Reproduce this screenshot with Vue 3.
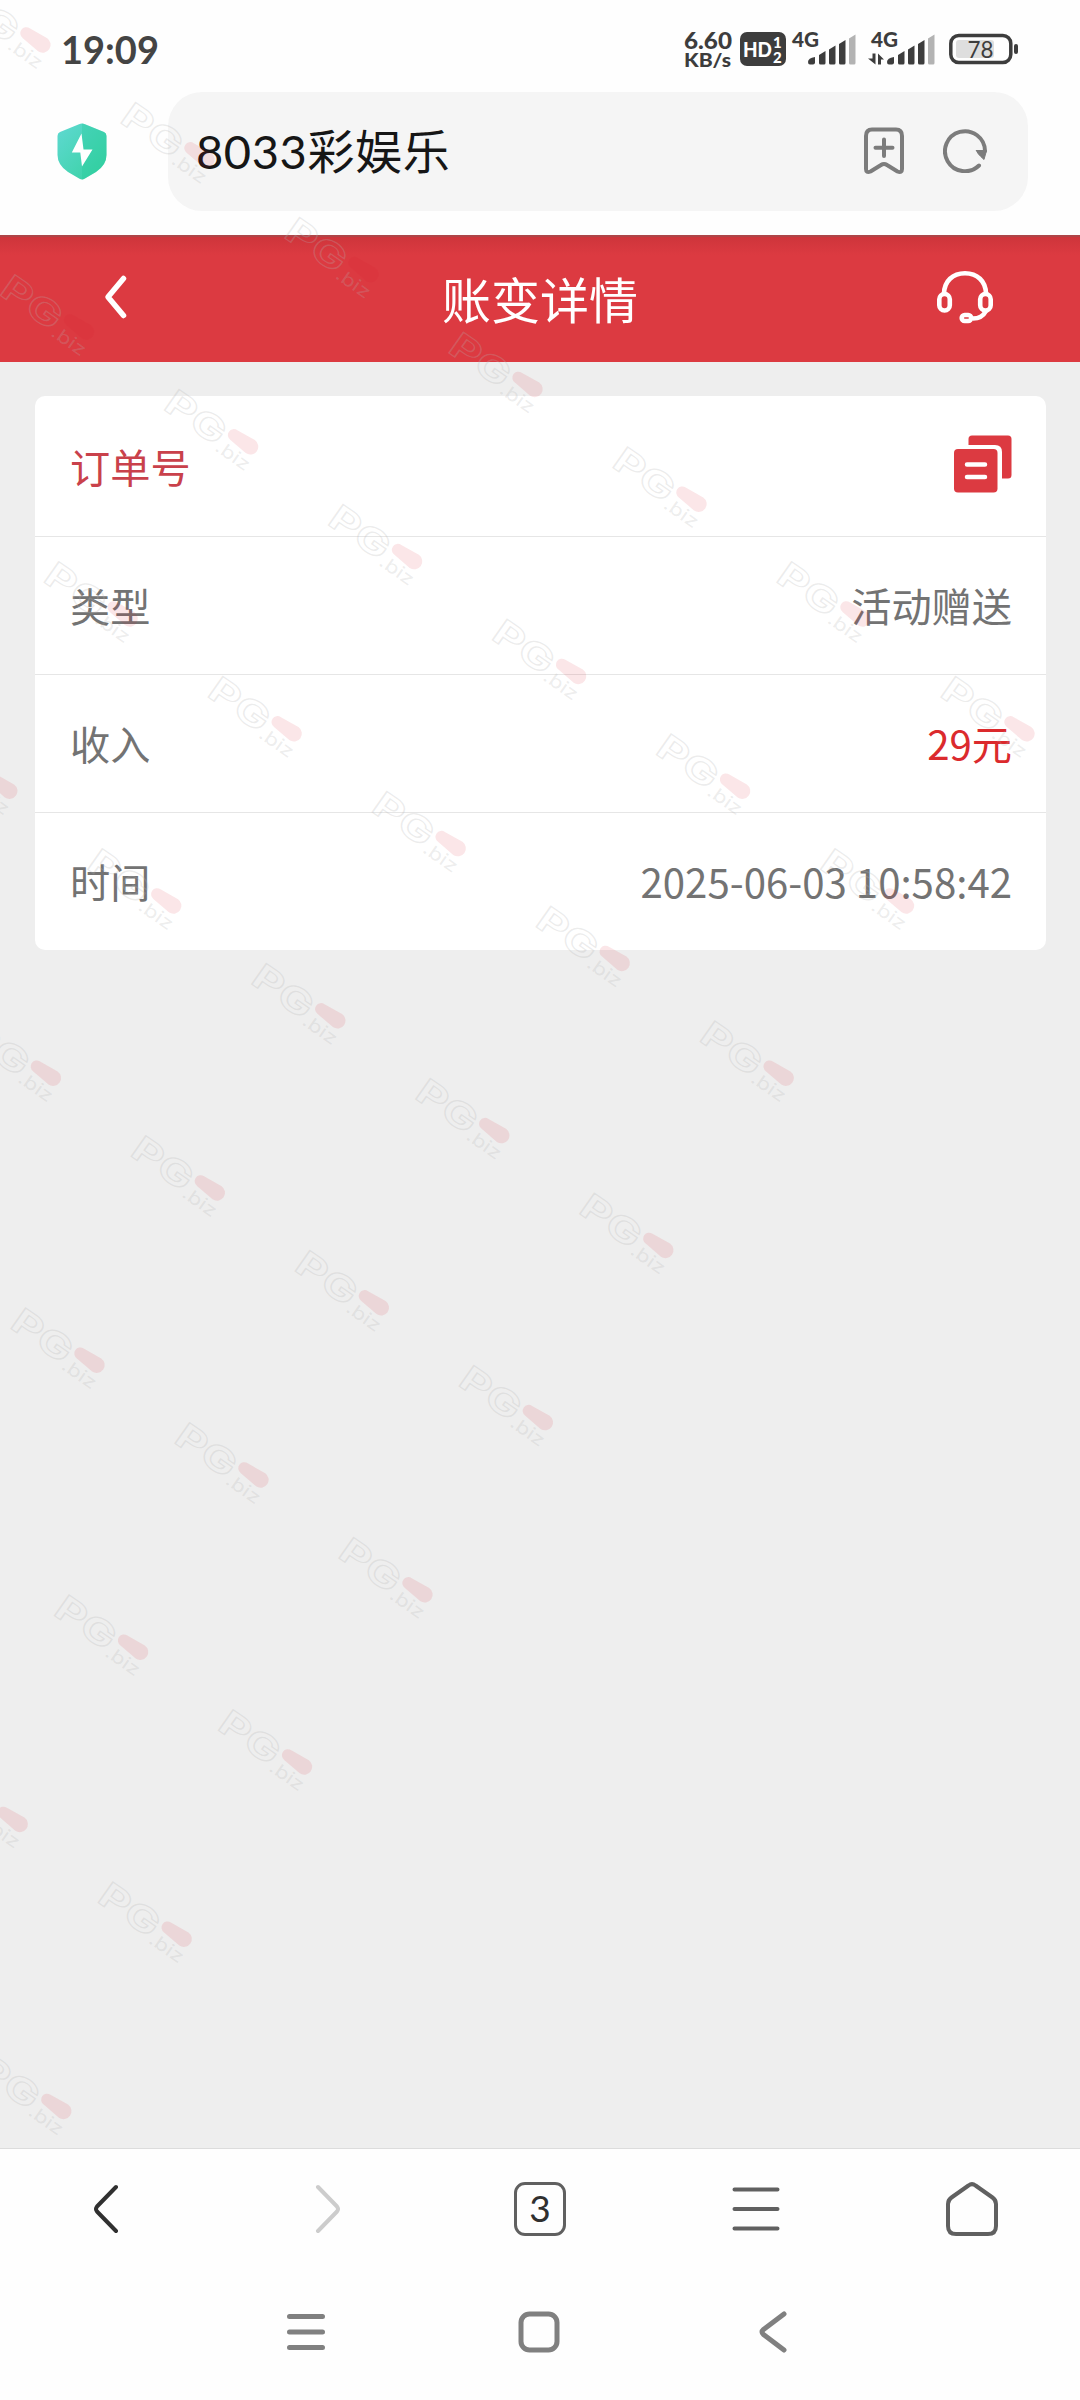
<template>
  <div class="phone">
    <header class="status-bar">
      <span class="clock">19:09</span>
      <svg class="status-icons" width="340" height="50" viewBox="680 25 340 50">
        <g class="bold-text">
          <text x="684" y="48.500" font-size="22" textLength="48" lengthAdjust="spacingAndGlyphs">6.60</text>
          <text x="684" y="67" font-size="19.500" textLength="47" lengthAdjust="spacingAndGlyphs">KB/s</text>
        </g>
        <rect x="740" y="32" width="46" height="34" rx="7" fill="#3d3d3d" />
        <g class="bold-text inverse">
          <text x="743" y="56.500" font-size="21" textLength="29" lengthAdjust="spacingAndGlyphs">HD</text>
          <text x="773" y="48" font-size="15">1</text>
          <text x="773" y="62.500" font-size="15">2</text>
        </g>
        <g v-for="sim in sims" :key="sim.x" :transform="`translate(${sim.x} 0)`">
          <text class="bold-text" x="0" y="47" font-size="21" textLength="27" lengthAdjust="spacingAndGlyphs">4G</text>
          <path v-if="sim.data" d="M-3 58.500H1.500V53.500H4.500V64.500ZM7 64.500V53.500L13 59.500H10V64.500Z" fill="#3d3d3d" />
          <path d="M16 62Q16 58 23 57V62.500Q23 64.500 21 64.500H18Q16 64.500 16 62Z" fill="#3d3d3d" />
          <path v-for="bar in bars" :key="bar.x" :d="barPath(bar)" :fill="bar.color" />
        </g>
        <rect x="950.8" y="35.500" width="60" height="27" rx="8" fill="none" stroke="#3d3d3d" stroke-width="3.500" />
        <rect x="956" y="40" width="38" height="18" rx="3" fill="#dedede" />
        <rect x="1014" y="44" width="4" height="10" rx="2" fill="#3d3d3d" />
        <text class="battery-text" x="980.500" y="57.500" font-size="24" text-anchor="middle" textLength="26" lengthAdjust="spacingAndGlyphs">78</text>
      </svg>
    </header>

    <section class="browser-bar">
      <svg class="shield" width="50" height="57" viewBox="0 0 50 57">
        <defs>
          <linearGradient id="shieldFill" x1="0" y1="0" x2="1" y2="1">
            <stop offset="0" stop-color="#5fd9d2" />
            <stop offset="1" stop-color="#36d19f" />
          </linearGradient>
        </defs>
        <path d="M25 .5Q26.500 .5 28 1.300L47 9Q49.500 10 49.500 13V32Q49.500 42 39 49L27.500 55.800Q25 57.300 22.500 55.800L11 49Q.5 42 .5 32V13Q.5 10 3 9L22 1.300Q23.500 .5 25 .5Z" fill="url(#shieldFill)" />
        <path d="M25 .5Q26.500 .5 28 1.300L47 9Q49.500 10 49.500 13V32Q49.500 42 39 49L27.500 55.800Q26 56.700 25 56.700Z" fill="#20c997" opacity=".3" />
        <path d="M24.500 10.500L14.800 29.500H23.300L25 43.500L35.500 26.500H26.500Z" fill="#fff" />
      </svg>
      <div class="address">
        <span class="address-text">8033彩娱乐</span>
        <svg class="line-icon" width="42" height="48" viewBox="0 0 42 48">
          <path d="M9 2.500H33Q39 2.500 39 9V42Q39 46.500 34.500 44.500L24 38Q21 36 18 38L7.500 44.500Q3 46.500 3 42V9Q3 2.500 9 2.500Z" />
          <path d="M21 12.500V29M12.500 20.800H29.500" />
        </svg>
        <svg class="line-icon reload" width="44" height="44" viewBox="0 0 44 44">
          <path d="M36 36.500A20 20 0 1 1 42 22" />
          <path class="solid" d="M33.500 21.500H43.500L41 30.500Q33.500 24 33.500 21.500Z" />
        </svg>
      </div>
    </section>

    <nav class="title-bar">
      <svg width="24" height="46" viewBox="0 0 24 46">
        <path d="M19.500 4.500L4 23L19.500 41.500" fill="none" stroke="#fff" stroke-width="5.500" stroke-linecap="round" stroke-linejoin="round" />
      </svg>
      <h1>账变详情</h1>
      <svg width="58" height="54" viewBox="0 0 58 54" fill="none" stroke="#fff" stroke-width="4.600">
        <path d="M8 24C8 11 17 3.300 29 3.300S50 11 50 24" />
        <rect x="3.300" y="24" width="10.500" height="16.500" rx="5.200" />
        <rect x="44.200" y="24" width="10.500" height="16.500" rx="5.200" />
        <path d="M50 41Q46 48.500 37 48.500" />
        <rect x="25.700" y="45" width="9.500" height="6" rx="3" />
      </svg>
    </nav>

    <main class="content">
      <div class="card">
        <div v-for="row in rows" :key="row.label" class="row">
          <span :class="{ accent: row.copy }">{{ row.label }}</span>
          <svg v-if="row.copy" class="copy" width="58" height="58" viewBox="0 0 58 58">
            <path d="M14.500 10V4Q14.500 .5 18 .5H54Q57.500 .5 57.500 4V40Q57.500 43.500 54 43.500H48V17Q48 10 41 10Z" fill="#dc3a41" />
            <rect x="0" y="14" width="43.500" height="43.500" rx="4" fill="#dc3a41" />
            <path d="M13 29.500H31M13 42H31" stroke="#fff" stroke-width="4.500" stroke-linecap="round" />
          </svg>
          <span v-else :class="{ amount: row.amount }">{{ row.value }}</span>
        </div>
      </div>
    </main>

    <footer class="toolbar">
      <button>
        <svg width="26" height="50" viewBox="0 0 26 50"><path class="back" d="M23 3L4 22.500Q2 25 4 27.500L23 47" /></svg>
      </button>
      <button>
        <svg width="26" height="50" viewBox="0 0 26 50"><path class="forward" d="M3 3L22 22.500Q24 25 22 27.500L3 47" /></svg>
      </button>
      <button><span class="tabs">3</span></button>
      <button>
        <svg width="48" height="50" viewBox="0 0 48 50"><path d="M2.500 5.500H45.500M2.500 25H45.500M2.500 44.500H45.500" /></svg>
      </button>
      <button>
        <svg width="52" height="54" viewBox="0 0 52 54">
          <path d="M22.500 3.500Q26 .8 29.500 3.500L46.500 15.500Q50 18 50 22V44Q50 52 42 52H10Q2 52 2 44V22Q2 18 5.500 15.500Z" />
        </svg>
      </button>
    </footer>

    <div class="system-nav">
      <svg width="40" height="42" viewBox="0 0 40 42"><path d="M3.500 5.500H36.500M3.500 21H36.500M3.500 36.500H36.500" /></svg>
      <svg class="home" width="42" height="42" viewBox="0 0 42 42"><rect x="3" y="3" width="36" height="36" rx="8.500" /></svg>
      <svg width="28" height="42" viewBox="0 0 28 42"><path d="M25 3L4.500 18.500Q1.500 21 4.500 23.500L25 39" /></svg>
    </div>

    <svg class="watermark" width="1080" height="2400" viewBox="0 0 1080 2400">
      <g v-for="mark in marks" :key="`${mark.x}-${mark.y}`" :transform="`translate(${mark.x} ${mark.y}) rotate(35)`">
        <text class="mark-name" x="-85" y="19" textLength="66" lengthAdjust="spacingAndGlyphs">PG</text>
        <path d="M-11 -6.500L9 -8.500A8 8 0 0 1 9 7.500L-11 5.500A6 6 0 0 1 -11 -6.500Z" fill="#d71e32" fill-opacity=".11" />
        <text class="mark-domain" x="-19" y="23" textLength="38" lengthAdjust="spacingAndGlyphs">.biz</text>
      </g>
    </svg>
  </div>
</template>

<script setup>
const rows = [
  { label: '订单号', copy: true },
  { label: '类型', value: '活动赠送' },
  { label: '收入', value: '29元', amount: true },
  { label: '时间', value: '2025-06-03 10:58:42' }
];

const sims = [
  { x: 792, data: false },
  { x: 871, data: true }
];

const bars = [
  { x: 27, top: 51, color: '#3d3d3d' },
  { x: 37, top: 45.5, color: '#3d3d3d' },
  { x: 47, top: 40, color: '#3d3d3d' },
  { x: 57, top: 34.5, color: '#b3b3b3' }
];

function barPath({ x, top }) {
  return `M${x} ${top + 4}L${x + 6.5} ${top}V63Q${x + 6.5} 64.5 ${x + 5} 64.5H${x + 1.5}Q${x} 64.5 ${x} 63Z`;
}

// first column of every diagonal line of watermarks; each line ends one mark earlier
const firstColumns = [0, 0, 0, -1, -1, -1, -1, -2, -2];
const marks = [];
firstColumns.forEach((first, line) => {
  for (let col = first; col <= 6 - line; col++) {
    marks.push({ x: 35 + col * 164 + line * 43.6, y: 40 + col * 114.8 + line * 287 });
  }
});
</script>

<style>
body {
  margin: 0;
}
</style>

<style scoped>
.phone {
  position: relative;
  width: 1080px;
  height: 2400px;
  display: flex;
  flex-direction: column;
  overflow: hidden;
  background: #fefefe;
  font-family: "Noto Sans CJK SC", sans-serif;
}
.status-bar {
  height: 92px;
  box-sizing: border-box;
  padding: 25px 60px 0 61px;
  display: flex;
  justify-content: space-between;
}
.clock {
  font-family: Lato, sans-serif;
  font-weight: 700;
  font-size: 38px;
  line-height: 48px;
  color: #444;
}
.bold-text {
  font-family: Lato, sans-serif;
  font-weight: 900;
  fill: #3d3d3d;
}
.bold-text.inverse {
  fill: #fff;
}
.battery-text {
  font-family: Lato, sans-serif;
  fill: #3d3d3d;
}
.browser-bar {
  height: 143px;
  box-sizing: border-box;
  padding: 0 52px 24px 57px;
  display: flex;
  align-items: center;
}
.address {
  flex: 1;
  height: 119px;
  box-sizing: border-box;
  margin-left: 61px;
  padding: 0 41px 2px 28px;
  display: flex;
  align-items: center;
  border-radius: 34px;
  background: #f5f5f5;
}
.address-text {
  flex: 1;
  font-family: Lato, "Noto Sans CJK SC", sans-serif;
  font-size: 47px;
  line-height: 64px;
  letter-spacing: 0.6px;
  color: #161616;
}
.line-icon {
  fill: none;
  stroke: #7c7c7c;
  stroke-width: 4;
  stroke-linecap: round;
  stroke-linejoin: round;
}
.line-icon .solid {
  fill: #7c7c7c;
  stroke-width: 1;
}
.reload {
  margin-left: 38px;
}
.title-bar {
  height: 127px;
  box-sizing: border-box;
  padding: 0 86px 4px 104px;
  display: flex;
  align-items: center;
  justify-content: space-between;
  background: linear-gradient(#ae4548 0, #ae4548 2px, #ce353b 2px, #dc3a41 20px);
}
.title-bar h1 {
  margin: 2px 0 0 16px;
  font-size: 49px;
  font-weight: 400;
  color: #fff;
}
.content {
  flex: 1;
  padding: 34px 34px 0 35px;
  background: #eee;
  border-bottom: 1px solid #dcdcdc;
}
.card {
  border-radius: 10px;
  background: #fff;
}
.row {
  height: 138px;
  box-sizing: border-box;
  padding: 0 34px 2px 35px;
  display: flex;
  align-items: center;
  justify-content: space-between;
  border-bottom: 1px solid #e6e6e6;
  font-size: 40.2px;
  color: #737373;
}
.row:first-child {
  height: 141px;
  padding-bottom: 1px;
}
.row:last-child {
  height: 137px;
  border-bottom: none;
}
.copy {
  margin-bottom: 3px;
}
.accent {
  color: #c9414b;
}
.amount {
  color: #db2a2d;
}
.toolbar {
  height: 119px;
  display: flex;
}
.toolbar button {
  flex: 0 0 216px;
  box-sizing: border-box;
  padding: 0;
  border: none;
  background: none;
  display: flex;
  align-items: center;
  justify-content: center;
}
.toolbar button:nth-child(1) {
  padding-right: 5px;
}
.toolbar button:nth-child(2) {
  padding-left: 8px;
}
.toolbar path {
  fill: none;
  stroke: #606060;
  stroke-width: 4;
  stroke-linecap: round;
  stroke-linejoin: round;
}
.toolbar .back {
  stroke: #303030;
}
.toolbar .forward {
  stroke: #ccc;
}
.tabs {
  width: 52px;
  height: 54px;
  box-sizing: border-box;
  border: 3.5px solid #606060;
  border-radius: 11px;
  font: 37px/46px Lato, sans-serif;
  color: #303030;
}
.system-nav {
  height: 132px;
  box-sizing: border-box;
  padding: 43px 293px 0 286px;
  display: flex;
  justify-content: space-between;
}
.system-nav svg {
  fill: none;
  stroke: #808080;
  stroke-width: 5;
  stroke-linecap: round;
}
.system-nav .home {
  margin-right: 8px;
}
.watermark {
  position: absolute;
  top: 0;
  left: 0;
  pointer-events: none;
}
.mark-name {
  font: 700 35px Inter, sans-serif;
  fill: none;
  stroke: #b4b4b4;
  stroke-opacity: .26;
  stroke-width: 1.2;
}
.mark-domain {
  font: 400 18px Inter, sans-serif;
  fill: #b4b4b4;
  fill-opacity: .24;
}
</style>
